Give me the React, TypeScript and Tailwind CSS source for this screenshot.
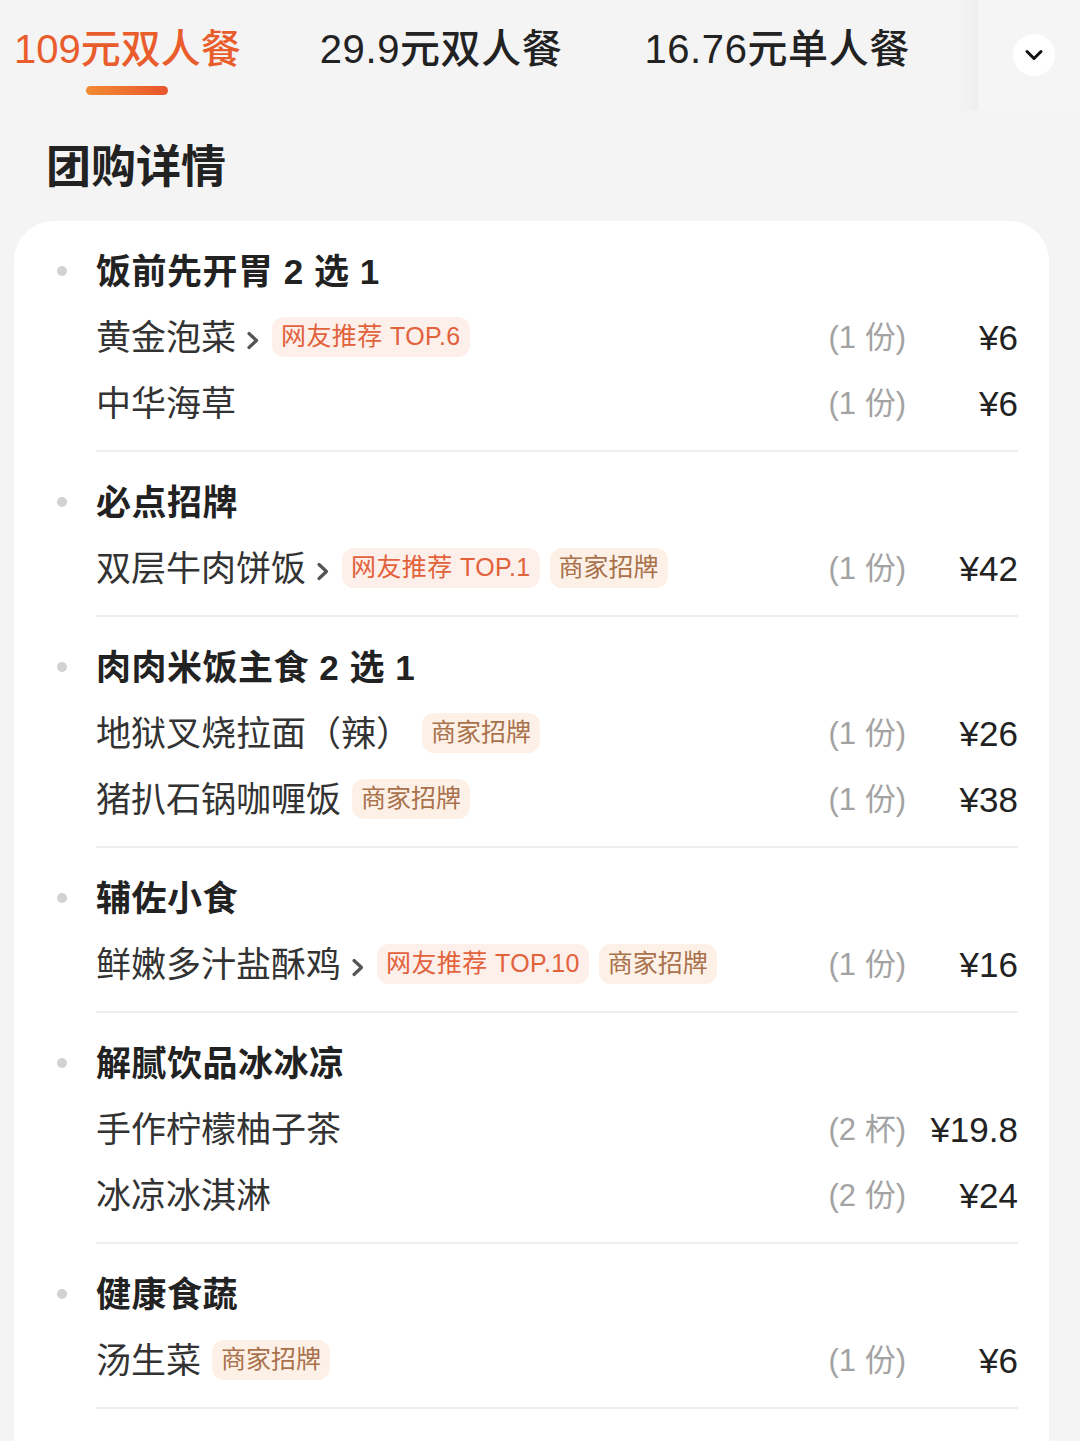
import { ChevronDown } from "lucide-react";

type Item = {
  name: string;
  arrow?: boolean;
  top?: string;
  brand?: boolean;
  qty: string;
  price: string;
};

type Section = { title: string; items: Item[] };

const sections: Section[] = [
  {
    title: "饭前先开胃 2 选 1",
    items: [
      { name: "黄金泡菜", arrow: true, top: "TOP.6", qty: "(1 份)", price: "¥6" },
      { name: "中华海草", qty: "(1 份)", price: "¥6" },
    ],
  },
  {
    title: "必点招牌",
    items: [
      { name: "双层牛肉饼饭", arrow: true, top: "TOP.1", brand: true, qty: "(1 份)", price: "¥42" },
    ],
  },
  {
    title: "肉肉米饭主食 2 选 1",
    items: [
      { name: "地狱叉烧拉面（辣）", brand: true, qty: "(1 份)", price: "¥26" },
      { name: "猪扒石锅咖喱饭", brand: true, qty: "(1 份)", price: "¥38" },
    ],
  },
  {
    title: "辅佐小食",
    items: [
      { name: "鲜嫩多汁盐酥鸡", arrow: true, top: "TOP.10", brand: true, qty: "(1 份)", price: "¥16" },
    ],
  },
  {
    title: "解腻饮品冰冰凉",
    items: [
      { name: "手作柠檬柚子茶", qty: "(2 杯)", price: "¥19.8" },
      { name: "冰凉冰淇淋", qty: "(2 份)", price: "¥24" },
    ],
  },
  {
    title: "健康食蔬",
    items: [{ name: "汤生菜", brand: true, qty: "(1 份)", price: "¥6" }],
  },
];

const tabs = ["109元双人餐", "29.9元双人餐", "16.76元单人餐"];

function Arrow() {
  return (
    <svg width="16" height="20" viewBox="0 0 16 20" className="ml-[9px] mt-[5px]">
      <polyline points="4,3.5 11.5,10.5 4,17.5" fill="none" stroke="#555" strokeWidth="3.2" strokeLinecap="round" strokeLinejoin="round" />
    </svg>
  );
}

function Row({ item }: { item: Item }) {
  return (
    <div className="flex h-[66px] items-center">
      <div className="flex min-w-0 flex-1 items-center">
        <span className="text-[35px] leading-none text-[#333]">{item.name}</span>
        {item.arrow && <Arrow />}
        <div className="ml-[11px] flex gap-[10px]">
          {item.top && (
            <span className="flex h-[40px] items-center rounded-[12px] bg-[#fdefea] px-[9px] text-[25px] tracking-[0.4px] text-[#e2623c]">
              网友推荐 {item.top}
            </span>
          )}
          {item.brand && (
            <span className="flex h-[40px] items-center rounded-[12px] bg-[#fdf1e7] px-[9px] text-[25px] text-[#a9714c]">
              商家招牌
            </span>
          )}
        </div>
      </div>
      <span className="text-[31px] leading-none text-[#a3a3a3]">{item.qty}</span>
      <span className="w-[112px] text-right text-[35px] leading-none text-[#222]">{item.price}</span>
    </div>
  );
}

export default function App() {
  return (
    <div
      className="relative min-h-[1441px] overflow-hidden bg-[#f4f4f4]"
      style={{ fontFamily: '"Liberation Sans", "Noto Sans CJK SC", sans-serif' }}
    >
      {/* tabs */}
      <div className="flex pl-[14px] pt-[27px]">
        {tabs.map((t, i) => (
          <div key={t} className={`flex flex-col items-center ${i === 1 ? "ml-[79px] mr-[82px]" : ""}`}>
            <span
              className={`whitespace-nowrap text-[40px] font-medium leading-[44px] ${
                i === 0 ? "text-[#e95d2d]" : "text-[#222]"
              } ${i === 0 ? "" : "tracking-[0.6px]"}`}
            >
              {t}
            </span>
            {i === 0 && (
              <div className="mt-[15px] h-[9px] w-[82px] rounded-full bg-gradient-to-r from-[#f18a32] to-[#e8542c]" />
            )}
          </div>
        ))}
      </div>

      <div className="absolute right-0 top-0 flex h-[110px] w-[102px] items-center justify-end bg-[#f5f5f5] pr-[25px]">
        <div className="absolute left-[-20px] top-0 h-full w-[20px] bg-gradient-to-l from-[#ececec] to-transparent opacity-70" />
        <div className="flex h-[42px] w-[42px] items-center justify-center rounded-full bg-white">
          <ChevronDown size={28} strokeWidth={2.6} color="#111" />
        </div>
      </div>

      <h1 className="ml-[46px] mt-[45px] text-[45px] font-bold leading-[56px] text-[#222]">团购详情</h1>

      <div className="ml-[14px] mr-[31px] mt-[25px] rounded-t-[40px] bg-white pb-[40px]">
        {sections.map((s) => (
          <div key={s.title} className="pl-[82px] pr-[31px]">
            <div className="border-b-2 border-[#eeeeee] pb-[14px] pt-[17px]">
              <div className="flex h-[66px] items-center">
                <div className="ml-[-39px] mr-[29px] h-[10px] w-[10px] rounded-full bg-[#d2d2d2]" />
                <span className="text-[35px] font-bold leading-none tracking-[0.5px] text-[#222]">{s.title}</span>
              </div>
              {s.items.map((it) => (
                <Row key={it.name} item={it} />
              ))}
            </div>
          </div>
        ))}
      </div>
    </div>
  );
}
